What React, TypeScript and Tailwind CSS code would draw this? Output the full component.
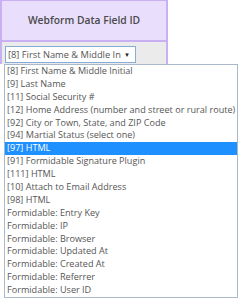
const options = [
  "[8] First Name & Middle Initial",
  "[9] Last Name",
  "[11] Social Security #",
  "[12] Home Address (number and street or rural route)",
  "[92] City or Town, State, and ZIP Code",
  "[94] Martial Status (select one)",
  "[97] HTML",
  "[91] Formidable Signature Plugin",
  "[111] HTML",
  "[10] Attach to Email Address",
  "[98] HTML",
  "Formidable: Entry Key",
  "Formidable: IP",
  "Formidable: Browser",
  "Formidable: Updated At",
  "Formidable: Created At",
  "Formidable: Referrer",
  "Formidable: User ID",
];

export default function App() {
  return (
    <div className="relative w-[240px] h-[300px] overflow-hidden bg-white [font-family:'Open_Sans',sans-serif] text-[#555]">
      <div className="w-[168px] border-l-2 border-t border-r-2 border-[#c9b0f2]">
        <div className="h-[41px] bg-[#e9defc] border-b-2 border-[#c9b0f2] flex items-center justify-center text-[10.3px] font-semibold text-[#4a4a4a]">
          Webform Data Field ID
        </div>
        <div className="h-[22px] bg-[#ebebeb] pl-[3px] pt-[4px]">
          <div className="w-[131px] h-[17px] bg-white border border-[#86acd8] flex items-center pl-[2px] pr-[5px] text-[9.3px] leading-none text-[#555]">
            <span className="whitespace-nowrap">[8] First Name &amp; Middle In</span>
            <span className="ml-auto text-[6px] text-[#222]">▼</span>
          </div>
        </div>
      </div>
      <div className="absolute left-[4px] top-[64px] w-[234px] border border-[#aab8cc] bg-white">
        {options.map((o, i) => (
          <div
            key={i}
            className={
              "h-[12.9px] px-[2px] text-[9.1px] leading-[12.9px] whitespace-nowrap " +
              (i === 6 ? "bg-[#1e90ff] text-white" : "")
            }
          >
            {o}
          </div>
        ))}
      </div>
    </div>
  );
}
